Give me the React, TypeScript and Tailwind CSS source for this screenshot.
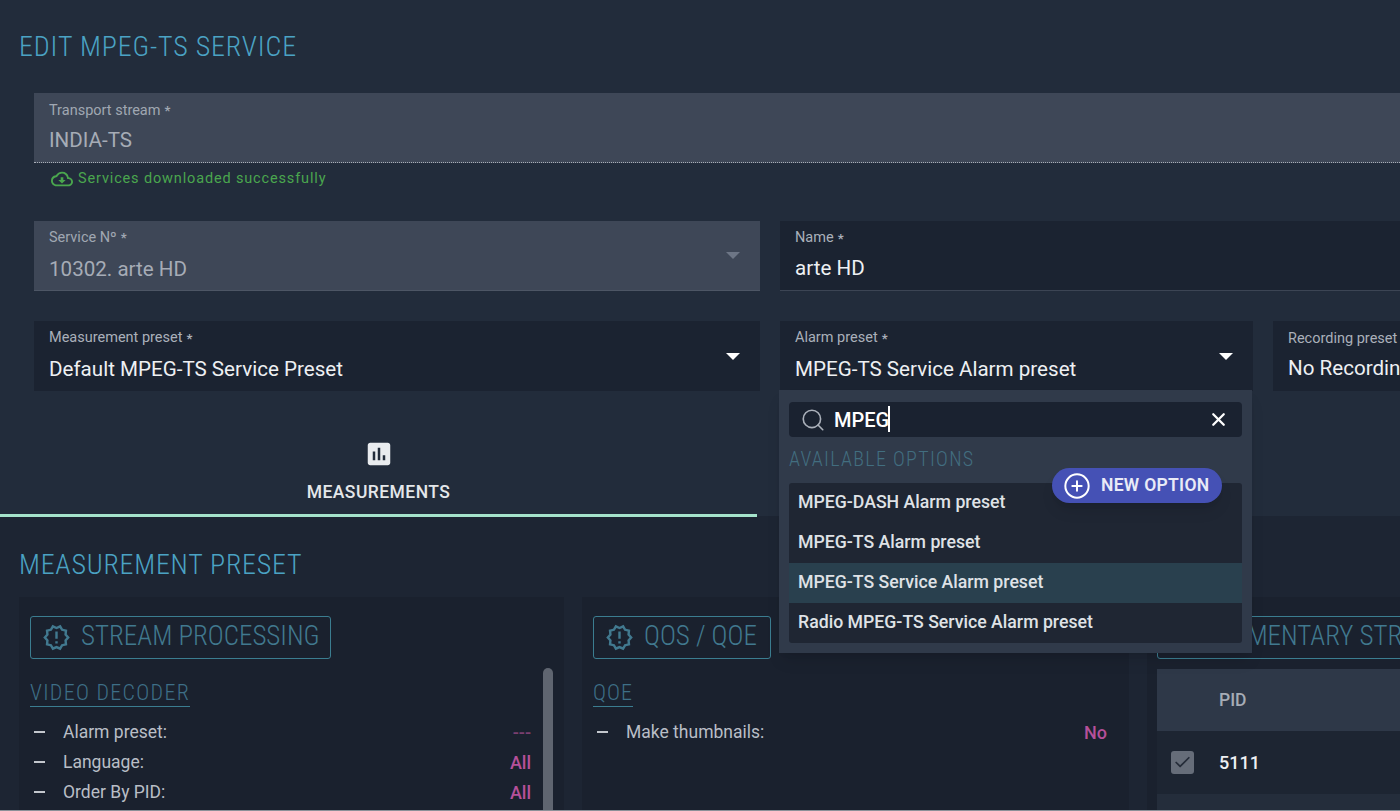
import { CirclePlus, Search, X, Check } from 'lucide-react';
import { MdAssessment, MdOutlineCloudDownload, MdOutlineNewReleases } from 'react-icons/md';

const condensed = 'font-[350] [font-stretch:75%]';

function Caret({ dim }: { dim?: boolean }) {
  return (
    <div className={`h-0 w-0 border-x-[7px] border-t-[7px] border-x-transparent ${dim ? 'border-t-[#6d7686]' : 'border-t-white'}`} />
  );
}

function Field({
  label,
  value,
  disabled,
  caret,
  className,
  gap = 'mt-[10px]',
}: {
  label: string;
  value: string;
  disabled?: boolean;
  caret?: boolean;
  className?: string;
  gap?: string;
}) {
  return (
    <div
      className={`flex h-[70px] items-center justify-between pl-[15px] pr-[20px] ${
        disabled ? 'bg-[#3e4757]' : 'bg-[#1b2331]'
      } ${className ?? ''}`}
    >
      <div className="min-w-0 -translate-y-[1px] whitespace-nowrap">
        <div className={`flex h-[16px] items-center gap-[4px] text-[14.5px] leading-[16px] ${disabled ? 'text-[#a0a7b2]' : 'text-[#aab0ba]'}`}>
          {label} <span className="text-[13px] font-bold leading-none">*</span>
        </div>
        <div className={`${gap} text-[20.6px] font-[450] leading-[22px] ${disabled ? 'text-[#a6acb6]' : 'text-[#eef0f3]'}`}>
          {value}
        </div>
      </div>
      {caret && <Caret dim={disabled} />}
    </div>
  );
}

function SectionButton({ text, className }: { text: string; className?: string }) {
  return (
    <div className={`flex h-[43px] items-center gap-[10px] whitespace-nowrap rounded-[3px] border border-[#3b7d90] pl-[11px] text-[#41798f] ${className ?? ''}`}>
      <MdOutlineNewReleases size={29} className="shrink-0" />
      <span className={`-translate-y-[1px] text-[27px] leading-none ${condensed}`}>{text}</span>
    </div>
  );
}

function InfoRow({ label, value, faint }: { label: string; value: string; faint?: boolean }) {
  return (
    <div className="flex h-[30px] items-center text-[17.5px] text-[#b9bec6]">
      <div className="mr-[18px] ml-[4px] h-[2px] w-[11px] bg-[#c3c7cd]" />
      <span className="flex-1">{label}</span>
      <span className={`text-[18px] font-medium ${faint ? 'text-[#7a3f70]' : 'text-[#b5509a]'}`}>{value}</span>
    </div>
  );
}

function AlarmMenu() {
  const options = ['MPEG-DASH Alarm preset', 'MPEG-TS Alarm preset', 'MPEG-TS Service Alarm preset', 'Radio MPEG-TS Service Alarm preset'];
  return (
    <div className="absolute top-[390px] left-[779px] z-10 w-[473px] bg-[#303a4a] px-[10px] pt-[12px] pb-[10px] shadow-lg">
      <div className="flex h-[35px] items-center rounded-[4px] bg-[#1a2230] pl-[11px] pr-[13px] text-white">
        <Search size={26} strokeWidth={1.5} className="shrink-0 text-[#aab0ba]" />
        <span className="ml-[8px] flex-1 -translate-y-[4px] text-[20px] font-medium leading-none">
          MPEG<span className="ml-[-1px] inline-block h-[26px] w-[2px] translate-y-[5px] bg-white" />
        </span>
        <X size={21} strokeWidth={2.6} />
      </div>
      <div className={`mt-[10px] text-[20px] leading-[24px] tracking-[1.3px] text-[#426e80] ${condensed}`}>AVAILABLE OPTIONS</div>
      <div className="mt-[12px] overflow-hidden rounded-[3px] bg-[#1f2633]">
        {options.map((o, i) => (
          <div
            key={o}
            className={`flex h-[40px] items-center pb-[2px] pl-[9px] text-[17.7px] font-medium text-[#dfe2e6] ${i === 2 ? 'bg-[#29404e]' : ''}`}
          >
            {o}
          </div>
        ))}
      </div>
      <div className="absolute top-[78px] left-[273px] flex h-[35px] w-[170px] items-center gap-[10px] rounded-full bg-[#4551b5] pl-[11px] shadow-lg">
        <CirclePlus size={28} strokeWidth={1.7} className="shrink-0 text-white" />
        <span className="text-[17.5px] font-semibold tracking-[0.3px] text-[#e9ebf7]">NEW OPTION</span>
      </div>
    </div>
  );
}

export default function App() {
  return (
    <div className="relative h-[811px] w-[1400px] overflow-hidden bg-[#1d2533] font-['Roboto',sans-serif]">
      <div className="h-[516px] bg-[#222c3b]">
        <h1 className={`pt-[28px] pl-[19px] text-[28px] leading-[38px] tracking-[0.85px] text-[#4ba3c4] ${condensed}`}>EDIT MPEG-TS SERVICE</h1>

        <div className="mt-[27px] ml-[34px] flex flex-col">
          <Field label="Transport stream" value="INDIA-TS" disabled gap="mt-[10px]" className="border-b border-dotted border-[#a9afb8]" />
          <div className="mt-[6px] flex h-[20px] items-center gap-[5px] pl-[17px] text-[14.5px] tracking-[0.85px] text-[#4aa64e]">
            <MdOutlineCloudDownload size={22} className="shrink-0" />
            Services downloaded successfully
          </div>
          <div className="mt-[32px] grid w-[1500px] grid-cols-[726px_1fr] gap-x-[20px]">
            <Field label="Service Nº" value="10302. arte HD" disabled caret gap="mt-[12px]" className="border-b border-[#4d5665]" />
            <Field label="Name" value="arte HD" gap="mt-[11px]" className="border-b border-[#3c4554]" />
          </div>
          <div className="mt-[30px] grid w-[1500px] grid-cols-[726px_473px_1fr] gap-x-[20px]">
            <Field label="Measurement preset" value="Default MPEG-TS Service Preset" caret gap="mt-[12px]" />
            <Field label="Alarm preset" value="MPEG-TS Service Alarm preset" caret gap="mt-[12px]" />
            <Field label="Recording preset" value="No Recording" gap="mt-[10px]" />
          </div>
        </div>

        <div className="mt-[38px] flex h-[88px] w-[757px] flex-col items-center border-b-[3px] border-[#a5e3cb] pt-[10px]">
          <MdAssessment size={30} className="shrink-0 text-[#e9ecef]" />
          <div className="mt-[13px] text-[17.5px] font-medium leading-[20px] tracking-[0.45px] text-[#e4e7ea]">MEASUREMENTS</div>
        </div>
      </div>

      <h2 className={`pt-[31px] pl-[19px] text-[28px] leading-[36px] tracking-[0.75px] text-[#4ba3c4] ${condensed}`}>MEASUREMENT PRESET</h2>

      <div className="mt-[14px] flex gap-[18px] pl-[19px]">
        <div className="relative h-[300px] w-[545px] shrink-0 bg-[#1a212e] pt-[19px] pl-[11px] pr-[33px]">
          <SectionButton text="STREAM PROCESSING" className="w-[301px]" />
          <div className={`mt-[20px] inline-block border-b border-[#3b7d90] text-[22px] leading-[27px] tracking-[1.3px] text-[#3e6f87] ${condensed}`}>VIDEO DECODER</div>
          <div className="mt-[10px]">
            <InfoRow label="Alarm preset:" value="---" faint />
            <InfoRow label="Language:" value="All" />
            <InfoRow label="Order By PID:" value="All" />
          </div>
          <div className="absolute top-[71px] right-[11px] h-[200px] w-[10px] rounded-full bg-[#5f6570]" />
        </div>

        <div className="h-[300px] w-[547px] shrink-0 bg-[#1a212e] pt-[19px] pl-[11px] pr-[22px]">
          <SectionButton text="QOS / QOE" className="w-[178px]" />
          <div className={`mt-[20px] inline-block border-b border-[#3b7d90] text-[22px] leading-[27px] tracking-[1px] text-[#3e6f87] ${condensed}`}>QOE</div>
          <div className="mt-[10px]">
            <InfoRow label="Make thumbnails:" value="No" />
          </div>
        </div>

        <div className="h-[300px] w-[400px] shrink-0 bg-[#1a212e] pt-[19px] pl-[10px]">
          <SectionButton text="ELEMENTARY STREAMS" className="w-[400px]" />
          <div className="mt-[10px] flex h-[62px] items-center bg-[#2e3848] pl-[62px] text-[17.5px] font-medium text-[#a6acb6]">PID</div>
          <div className="flex h-[63px] items-center bg-[#1d2532] pl-[14px] text-[18px] font-medium text-[#eef0f3]">
            <div className="mr-[25px] flex h-[23px] w-[23px] items-center justify-center rounded-[3px] bg-[#666d79]">
              <Check size={19} strokeWidth={2.2} className="text-[#252c39]" />
            </div>
            5111
          </div>
          <div className="h-[60px] bg-[#242d3b]" />
        </div>
      </div>

      <div className="absolute bottom-0 left-0 h-[1px] w-full bg-[#8b9098]" />
      <AlarmMenu />
    </div>
  );
}
